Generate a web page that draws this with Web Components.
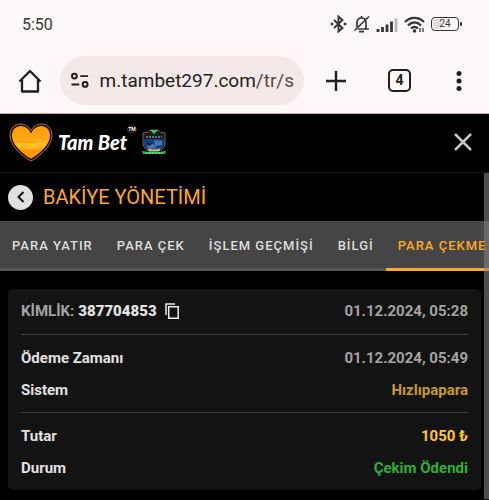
<!DOCTYPE html>
<html lang="tr">
<head>
<meta charset="utf-8">
<meta name="viewport" content="width=device-width, initial-scale=1">
<title>Bakiye Yönetimi</title>
<style>
  html, body {
    margin: 0;
    min-height: 100%;
    background: #000;
  }

  body {
    font-family: Roboto, "Liberation Sans", sans-serif;
    --surface-light: #fef9f8;
    --ink: #231d1c;
    --accent: #ffa726;
  }
</style>
</head>
<body>
<status-bar time="5:50" battery="24"></status-bar>
<browser-bar url="m.tambet297.com" path="/tr/s" tabs="4"></browser-bar>
<site-header></site-header>
<balance-page heading="BAKİYE YÖNETİMİ">
  <tab-strip slot="tabs">
    <tab-item>PARA YATIR</tab-item>
    <tab-item>PARA ÇEK</tab-item>
    <tab-item>İŞLEM GEÇMİŞİ</tab-item>
    <tab-item>BİLGİ</tab-item>
    <tab-item active>PARA ÇEKME</tab-item>
  </tab-strip>
  <payout-card number="387704853" date="01.12.2024, 05:28">
    <payout-group>
      <payout-row label="Ödeme Zamanı">01.12.2024, 05:49</payout-row>
      <payout-row label="Sistem" tone="gold">Hızlıpapara</payout-row>
    </payout-group>
    <payout-group>
      <payout-row label="Tutar" tone="yellow">1050 ₺</payout-row>
      <payout-row label="Durum" tone="green">Çekim Ödendi</payout-row>
    </payout-group>
  </payout-card>
</balance-page>

<script>
class StatusBar extends HTMLElement {
  constructor() {
    super();
    this.attachShadow({ mode: "open" });
  }

  connectedCallback() {
    this.shadowRoot.innerHTML = `
      <style>
        :host {
          display: flex;
          align-items: center;
          justify-content: space-between;
          height: 48px;
          padding: 0 27px 0 22px;
          background: var(--surface-light);
          color: #3a3434;
          box-sizing: border-box;
        }
        .time { font-size: 16px; }
        .icons { display: flex; align-items: center; gap: 6px; }
        svg { display: block; fill: none; stroke: currentColor; }
        .battery { display: flex; align-items: center; gap: 1px; }
        .cell {
          width: 28px;
          height: 14px;
          box-sizing: border-box;
          border: 1px solid currentColor;
          border-radius: 4px;
          background: linear-gradient(90deg, #e2dddc 8px, transparent 8px) content-box;
          padding: 1px;
          font-size: 10px;
          line-height: 10px;
          text-align: center;
        }
        .tip { width: 2px; height: 4px; background: currentColor; border-radius: 0 1px 1px 0; }
      </style>
      <span class="time">${this.getAttribute("time")}</span>
      <div class="icons">
        <svg width="17" height="18" viewBox="0 0 17 18" stroke-width="1.9">
          <path d="M4 5l8.500 8L8.500 16.500v-15L12.500 5 4 13"/>
          <path d="M.6 9h2.700M13.700 9h2.700" stroke-width="2.600"/>
        </svg>
        <svg width="17" height="18" viewBox="0 0 17 18" stroke-width="1.700">
          <path d="M4 12V8c0-3 1.500-5 4.500-5S13 5 13 8v5.500M5 14h11M8.500 3V1M16 1.500L1.500 15.500"/>
          <path d="M6 16.600h5" stroke-width="1.800"/>
        </svg>
        <svg width="22" height="15" viewBox="0 0 22 15" stroke-width="2.800">
          <path d="M2 15v-3M6.500 15v-5M11 15V7.500M15.500 15V4.500"/>
          <path d="M20 15V1.500" stroke="#bcb6b5"/>
        </svg>
        <svg width="21" height="17" viewBox="0 0 21 17" stroke-width="2.300">
          <path d="M1 6c5.500-5.400 13.500-5.400 19 0M4 9.500c4-4 9-4 13 0M7 12.500c2-2 5-2 7 0"/>
          <circle cx="10.500" cy="15" r="1.800" fill="currentColor" stroke="none"/>
          <path d="M16 12v4M19 12v4" stroke-width="1.300"/>
        </svg>
        <div class="battery"><span class="cell">${this.getAttribute("battery")}</span><i class="tip"></i></div>
      </div>
    `;
  }
}

class BrowserBar extends HTMLElement {
  constructor() {
    super();
    this.attachShadow({ mode: "open" });
  }

  connectedCallback() {
    this.shadowRoot.innerHTML = `
      <style>
        :host {
          display: flex;
          align-items: center;
          height: 66px;
          padding: 0 24px 0 16px;
          box-sizing: border-box;
          background: var(--surface-light);
          border-bottom: 1px solid #b8a9a6;
          color: var(--ink);
        }
        button {
          display: grid;
          place-items: center;
          padding: 0;
          border: 0;
          background: none;
          color: inherit;
          font: inherit;
        }
        svg { display: block; fill: none; stroke: currentColor; stroke-width: 2; }
        .home { width: 28px; height: 40px; margin-right: 16px; }
        .address {
          display: flex;
          flex: 1;
          align-items: center;
          gap: 10px;
          min-width: 0;
          height: 49px;
          padding: 0 10px;
          border-radius: 25px;
          box-sizing: border-box;
          background: #f3e9e8;
        }
        .url { font-size: 19px; white-space: nowrap; }
        .path { color: #5b4a48; }
        .actions { display: flex; align-items: center; gap: 42px; margin-left: 22px; }
        .count {
          width: 23px;
          height: 23px;
          box-sizing: border-box;
          border: 2px solid currentColor;
          border-radius: 5px;
          font-size: 14px;
          font-weight: 700;
          line-height: 19px;
        }
        .menu { width: 12px; }
        .menu svg { fill: currentColor; stroke: none; }
      </style>
      <button class="home" aria-label="Ana sayfa">
        <svg width="24" height="24" viewBox="0 0 24 24">
          <path d="M1.500 12.500L12 2l10.500 10.500M4 11v11.500h16V11" stroke-width="2.300" stroke-linejoin="round"/>
        </svg>
      </button>
      <div class="address">
        <svg width="20" height="17" viewBox="0 0 20 17">
          <circle cx="4.500" cy="4" r="2.500"/>
          <path d="M10.500 4h8M1.500 12.500h8"/>
          <circle cx="15.500" cy="12.500" r="2.500"/>
        </svg>
        <span class="url">${this.getAttribute("url")}<span class="path">${this.getAttribute("path")}</span></span>
      </div>
      <div class="actions">
        <button aria-label="Yeni sekme">
          <svg width="20" height="20" viewBox="0 0 20 20"><path d="M10 0v20M0 10h20" stroke-width="2.400"/></svg>
        </button>
        <button class="count" aria-label="Sekmeler">${this.getAttribute("tabs")}</button>
        <button class="menu" aria-label="Menü">
          <svg width="6" height="20" viewBox="0 0 6 20">
            <circle cx="3" cy="2.600" r="2.500"/><circle cx="3" cy="10" r="2.500"/><circle cx="3" cy="17.400" r="2.500"/>
          </svg>
        </button>
      </div>
    `;
  }
}

class SiteHeader extends HTMLElement {
  constructor() {
    super();
    this.attachShadow({ mode: "open" });
  }

  connectedCallback() {
    this.shadowRoot.innerHTML = `
      <style>
        :host {
          display: flex;
          align-items: center;
          justify-content: space-between;
          height: 59px;
          padding: 0 17px 2px 9px;
          box-sizing: border-box;
          background: #000;
          border-bottom: 1px solid #161616;
        }
        .brand { display: flex; align-items: center; gap: 5px; color: #fff; text-decoration: none; }
        .name { display: flex; height: 32px; font: italic 900 20px/32px Lato, "Liberation Sans", sans-serif; }
        .tm {
          align-self: flex-start;
          border: 1px solid #4b3526;
          border-radius: 4px;
          font: 700 5px/5px Roboto, sans-serif;
        }
        .close { display: block; padding: 0; border: 0; background: none; color: #c4c4c4; }
        svg { display: block; }
      </style>
      <a class="brand" href="#">
        <svg width="44" height="39" viewBox="0 0 44 39">
          <defs>
            <linearGradient id="sun" x2="0" y2="1">
              <stop offset="0" stop-color="#ff9d0c"/>
              <stop offset=".4" stop-color="#ffa914"/>
              <stop offset=".6" stop-color="#ffc025"/>
              <stop offset=".75" stop-color="#ff9808"/>
              <stop offset="1" stop-color="#ff9410"/>
            </linearGradient>
          </defs>
          <path d="M22 38C16 35 1 24 1 12.500 1 5 6 1 11.500 1 16.500 1 20 4 22 7.500 24 4 27.500 1 32.500 1 38 1 43 5 43 12.500 43 24 28 35 22 38z" fill="#130b02" stroke="#bd7821" stroke-width="1"/>
          <path d="M22 35.800C16 32.500 3 23 3 12.500 3 6.500 7 3 11.700 3 17 3 20.500 7 22 10.500 23.500 7 27 3 32.300 3 37 3 41 6.500 41 12.500 41 23 28 32.500 22 35.800z" fill="url(#sun)"/>
          <path d="M6 19q6-2 12 0t10-1M27 8l8-1" fill="none" stroke="#ee8d0b" stroke-width="1" opacity=".7"/>
          <path d="M18 21q7 2 16-1M13 25h16" fill="none" stroke="#ffd248" stroke-width="1" opacity=".5"/>
        </svg>
        <span class="name">Tam Bet<span class="tm">TM</span></span>
        <svg width="24" height="26" viewBox="0 0 24 26">
          <path d="M1 4q5 0 7-3h8q2 3 7 3v10q0 7-11 10Q1 21 1 14z" fill="#151b20" stroke="#776249" stroke-width="1"/>
          <path d="M2 10h20v5q-1 6-10 8Q3 21 2 15z" fill="#163e87"/>
          <path d="M12 11l8 1v4l-7 1zM4 17l7-2 4 4-7 1z" fill="#4b74b4"/>
          <path d="M8 1h8l-4 4z" fill="#37ca73"/>
          <path d="M4 8h16" stroke="#858b8b" stroke-width="1.500" stroke-dasharray="2 1"/>
          <path d="M5 13l2 3 3-2" fill="none" stroke="#0b1e49" stroke-width="1.500"/>
          <path d="M6 19.500q6 2 12 0v2q-6 2-12 0z" fill="#d2c746"/>
          <path d="M0 22q12 2 24 0l-1 3H1z" fill="#22b463"/>
          <path d="M4 24h16" stroke="#a0e2b7" stroke-width="1" stroke-dasharray="2 1"/>
        </svg>
      </a>
      <button class="close" aria-label="Kapat">
        <svg width="18" height="18" viewBox="0 0 18 18">
          <path d="M1 1l16 16M17 1L1 17" stroke="currentColor" stroke-width="2.500"/>
        </svg>
      </button>
    `;
  }
}

class BalancePage extends HTMLElement {
  constructor() {
    super();
    this.attachShadow({ mode: "open" });
  }

  connectedCallback() {
    this.shadowRoot.innerHTML = `
      <style>
        :host { display: block; position: relative; background: #000; }
        .title { display: flex; align-items: center; gap: 10px; height: 48px; padding-left: 8px; }
        h1 { margin: 0; font-size: 20px; font-weight: 400; color: var(--accent); }
        button {
          display: grid;
          place-items: center;
          width: 25px;
          height: 25px;
          padding: 0;
          border: 0;
          border-radius: 50%;
          background: #e0e0e0;
        }
        .content { padding: 18px 8px 9px; }
        /* overlay scroll indicator, drawn above the tabs */
        .thumb {
          position: absolute;
          top: 0;
          right: 0;
          bottom: 0;
          width: 5px;
          background: rgba(128, 128, 128, .6);
        }
      </style>
      <div class="title">
        <button aria-label="Geri">
          <svg width="8" height="12" viewBox="0 0 8 12">
            <path d="M6.500 1L1.500 6l5 5" fill="none" stroke="#111" stroke-width="2"/>
          </svg>
        </button>
        <h1>${this.getAttribute("heading")}</h1>
      </div>
      <slot name="tabs"></slot>
      <div class="content"><slot></slot></div>
      <div class="thumb"></div>
    `;
  }
}

class TabStrip extends HTMLElement {
  constructor() {
    super();
    this.attachShadow({ mode: "open" });
    this.shadowRoot.innerHTML = `
      <style>
        :host {
          display: flex;
          height: 50px;
          overflow: hidden;
          background: linear-gradient(0deg, #585858 3px, #454545 3px);
        }
      </style>
      <slot></slot>
    `;
  }
}

class TabItem extends HTMLElement {
  constructor() {
    super();
    this.attachShadow({ mode: "open" });
    this.shadowRoot.innerHTML = `
      <style>
        :host { display: flex; flex: none; }
        button {
          padding: 1px 12px 0;
          border: 0;
          border-bottom: 3px solid transparent;
          background: none;
          color: #dedede;
          font: 500 13px Roboto, sans-serif;
          letter-spacing: 1px;
          white-space: nowrap;
        }
        :host([active]) button { color: var(--accent); border-color: var(--accent); }
      </style>
      <button><slot></slot></button>
    `;
  }
}

class PayoutCard extends HTMLElement {
  constructor() {
    super();
    this.attachShadow({ mode: "open" });
  }

  connectedCallback() {
    this.shadowRoot.innerHTML = `
      <style>
        :host {
          display: block;
          padding: 6px 13px;
          border-radius: 5px;
          background: #131313;
          font-size: 15px;
          font-weight: 700;
          color: #a3a3a3;
        }
        .head { display: flex; align-items: center; justify-content: space-between; height: 32px; margin-bottom: 7px; }
        .id { display: flex; align-items: center; gap: 4px; }
        strong { color: #e2e2e2; }
        button { padding: 0; margin-left: 4px; border: 0; background: none; color: #eee; }
        svg { display: block; }
      </style>
      <div class="head">
        <span class="id">KİMLİK: <strong>${this.getAttribute("number")}</strong>
          <button aria-label="Kopyala">
            <svg width="14" height="16" viewBox="0 0 14 16" fill="none" stroke="currentColor" stroke-width="1.500">
              <path d="M10 1H1v11M3.700 3.700h9.500v11.500H3.700z"/>
            </svg>
          </button>
        </span>
        <span>${this.getAttribute("date")}</span>
      </div>
      <slot></slot>
    `;
  }
}

class PayoutGroup extends HTMLElement {
  constructor() {
    super();
    this.attachShadow({ mode: "open" });
    this.shadowRoot.innerHTML = `
      <style>
        :host { display: block; padding: 7px 0 6px; border-top: 1px solid #3a3a3a; }
        :host(:last-child) { padding-bottom: 0; }
      </style>
      <slot></slot>
    `;
  }
}

class PayoutRow extends HTMLElement {
  constructor() {
    super();
    this.attachShadow({ mode: "open" });
  }

  connectedCallback() {
    this.shadowRoot.innerHTML = `
      <style>
        :host { display: flex; align-items: center; justify-content: space-between; height: 32px; }
        .label { color: #e2e2e2; }
        :host([tone="gold"]) .value { color: #c99a20; }
        :host([tone="yellow"]) .value { color: #ffca28; }
        :host([tone="green"]) .value { color: #2eaf3c; }
      </style>
      <span class="label">${this.getAttribute("label")}</span>
      <span class="value"><slot></slot></span>
    `;
  }
}

customElements.define("status-bar", StatusBar);
customElements.define("browser-bar", BrowserBar);
customElements.define("site-header", SiteHeader);
customElements.define("balance-page", BalancePage);
customElements.define("tab-strip", TabStrip);
customElements.define("tab-item", TabItem);
customElements.define("payout-card", PayoutCard);
customElements.define("payout-group", PayoutGroup);
customElements.define("payout-row", PayoutRow);
</script>
</body>
</html>
